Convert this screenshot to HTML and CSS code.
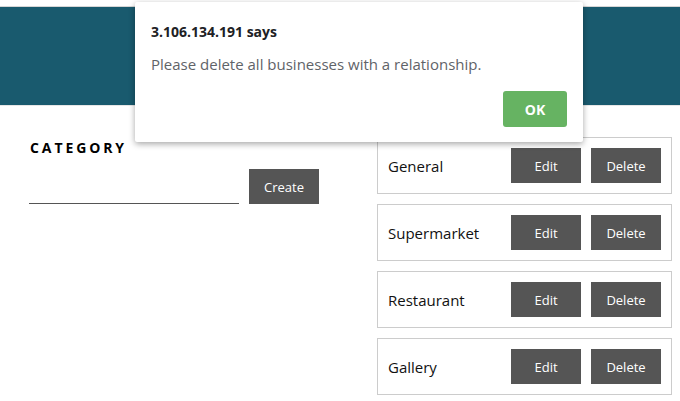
FILE: index.html
```html
<!DOCTYPE html>
<html>
<head>
<meta charset="utf-8">
<link rel="stylesheet" href="styles.css">
</head>
<body>
<header class="topbar"></header>
<main class="page">
  <section class="create-col">
    <h2 class="heading">CATEGORY</h2>
    <form class="create-form">
      <input class="name-input" type="text">
      <button class="btn" type="button">Create</button>
    </form>
  </section>
  <section class="list-col">
    <div class="card"><span class="card-name">General</span><div class="card-actions"><button class="btn">Edit</button><button class="btn">Delete</button></div></div>
    <div class="card"><span class="card-name">Supermarket</span><div class="card-actions"><button class="btn">Edit</button><button class="btn">Delete</button></div></div>
    <div class="card"><span class="card-name">Restaurant</span><div class="card-actions"><button class="btn">Edit</button><button class="btn">Delete</button></div></div>
    <div class="card"><span class="card-name">Gallery</span><div class="card-actions"><button class="btn">Edit</button><button class="btn">Delete</button></div></div>
  </section>
</main>
<div class="dialog">
  <div class="dialog-title">3.106.134.191 says</div>
  <div class="dialog-msg">Please delete all businesses with a relationship.</div>
  <div class="dialog-actions"><button class="ok-btn">OK</button></div>
</div>
</body>
</html>
```

FILE: styles.css
```css
html, body {
  margin: 0;
  padding: 0;
  background: #fff;
}
body {
  padding-top: 6px;
  font-family: "Open Sans", "Noto Sans", sans-serif;
  color: #111;
  position: relative;
  overflow: hidden;
  height: 395px;
}
.topbar {
  height: 98px;
  background: #195a6e;
  border-top: 1px solid #d6d6d6;
  border-bottom: 1px solid #e6e6e6;
}
.page {
  display: grid;
  grid-template-columns: 348px 295px;
  padding: 31px 0 0 29px;
}
.heading {
  margin: 1px 0 0 1px;
  font-size: 14px;
  font-weight: 700;
  letter-spacing: 2.9px;
  line-height: 19px;
  color: #000;
}
.create-form {
  display: flex;
  align-items: flex-end;
  gap: 10px;
  margin-top: 12px;
}
.name-input {
  width: 210px;
  height: 30px;
  box-sizing: border-box;
  border: none;
  border-bottom: 1px solid #555;
  outline: none;
  padding: 0;
  background: transparent;
}
.btn {
  width: 70px;
  height: 35px;
  border: none;
  background: #555;
  color: #fff;
  font-family: "Open Sans", "Noto Sans", sans-serif;
  font-size: 13px;
  padding: 0;
}
.list-col {
  display: flex;
  flex-direction: column;
  gap: 10px;
}
.card {
  display: flex;
  align-items: center;
  justify-content: space-between;
  border: 1px solid #cccccc;
  padding: 10px;
}
.card-name {
  font-size: 15px;
  color: #111;
}
.card-actions {
  display: flex;
  gap: 10px;
}
.dialog {
  position: absolute;
  left: 135px;
  top: 2px;
  width: 448px;
  height: 140px;
  box-sizing: border-box;
  background: #fff;
  border-radius: 2px;
  box-shadow: 0 2px 6px rgba(0,0,0,0.35);
  padding: 20px 16px 0 16px;
  font-family: "Open Sans", "Noto Sans", sans-serif;
}
.dialog-title {
  font-size: 14px;
  font-weight: 700;
  color: #202124;
  line-height: 20px;
}
.dialog-msg {
  font-size: 15px;
  color: #5f6368;
  margin-top: 12px;
  line-height: 20px;
}
.dialog-actions {
  display: flex;
  justify-content: flex-end;
  margin-top: 17px;
}
.ok-btn {
  width: 64px;
  height: 36px;
  border: none;
  border-radius: 3px;
  background: #66b362;
  color: #fff;
  font-family: "Open Sans", "Noto Sans", sans-serif;
  font-weight: 700;
  font-size: 14px;
  padding: 0;
}
```
